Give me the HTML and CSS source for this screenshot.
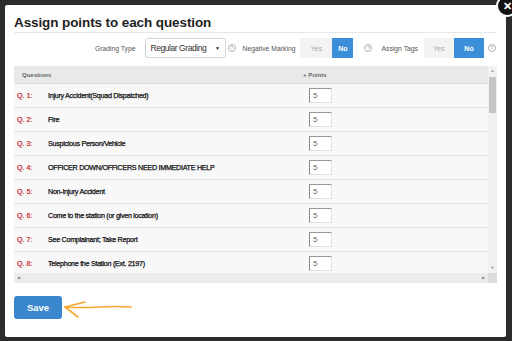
FILE: index.html
```html
<!DOCTYPE html>
<html>
<head>
<meta charset="utf-8">
<link rel="stylesheet" href="styles.css">
</head>
<body>
<div class="modal">
  <div class="close">&#x2715;</div>
  <h1 class="title">Assign points to each question</h1>
  <div class="toolbar">
    <span class="lbl l-grading">Grading Type</span>
    <div class="select"><span>Regular Grading</span><span class="caret">&#9660;</span></div>
    <span class="help h1">?</span>
    <span class="lbl l-neg">Negative Marking</span>
    <div class="toggle t1"><span class="yes">Yes</span><span class="no">No</span></div>
    <span class="help h2">?</span>
    <span class="lbl l-tags">Assign Tags</span>
    <div class="toggle t2"><span class="yes">Yes</span><span class="no">No</span></div>
    <span class="help h3">?</span>
  </div>
  <div class="tablewrap">
    <div class="viewport">
      <div class="thead">
        <div class="hq">Questions</div>
        <div class="hp">+ Points</div>
      </div>
      <div class="row"><div class="q"><span class="num">Q. 1:</span><span class="txt">Injury Accident(Squad Dispatched)</span></div><div class="p"><span class="inp">5</span></div></div>
      <div class="row"><div class="q"><span class="num">Q. 2:</span><span class="txt">Fire</span></div><div class="p"><span class="inp">5</span></div></div>
      <div class="row"><div class="q"><span class="num">Q. 3:</span><span class="txt">Suspicious Person/Vehicle</span></div><div class="p"><span class="inp">5</span></div></div>
      <div class="row"><div class="q"><span class="num">Q. 4:</span><span class="txt">OFFICER DOWN/OFFICERS NEED IMMEDIATE HELP</span></div><div class="p"><span class="inp">5</span></div></div>
      <div class="row"><div class="q"><span class="num">Q. 5:</span><span class="txt">Non-Injury Accident</span></div><div class="p"><span class="inp">5</span></div></div>
      <div class="row"><div class="q"><span class="num">Q. 6:</span><span class="txt">Come to the station (or given location)</span></div><div class="p"><span class="inp">5</span></div></div>
      <div class="row"><div class="q"><span class="num">Q. 7:</span><span class="txt">See Complainant; Take Report</span></div><div class="p"><span class="inp">5</span></div></div>
      <div class="row"><div class="q"><span class="num">Q. 8:</span><span class="txt">Telephone the Station (Ext. 2197)</span></div><div class="p"><span class="inp">5</span></div></div>
    </div>
    <div class="vbar">
      <span class="arr">&#9650;</span>
      <div class="vtrack"><div class="vthumb"></div></div>
      <span class="arr">&#9660;</span>
    </div>
    <div class="hbar"><span class="arr">&#9664;</span><span class="arr">&#9654;</span></div>
    <div class="corner"></div>
  </div>
  <div class="footer">
    <button class="save">Save</button>
    <svg class="pointer" width="72" height="22" viewBox="0 0 72 22">
      <path d="M2 10 Q20 11 36 10 T68 10" fill="none" stroke="#f5a630" stroke-width="1.6" stroke-linecap="round"/>
      <path d="M2 10 L22 5 M2 10 L15 20" fill="none" stroke="#f5a630" stroke-width="1.6" stroke-linecap="round"/>
    </svg>
  </div>
</div>
</body>
</html>
```

FILE: styles.css
```css
html, body {
  margin: 0;
  padding: 0;
}
body {
  width: 512px;
  height: 341px;
  background: #2c2c2c;
  font-family: "Liberation Sans", Arial, sans-serif;
  overflow: hidden;
}
.modal {
  position: relative;
  margin: 5px 6px 0 5px;
  height: 332px;
  background: #fff;
  border-radius: 2px;
  padding: 6px 10px 0 9px;
  box-sizing: border-box;
}
.close {
  position: absolute;
  left: 491px;
  top: -10px;
  width: 18px;
  height: 18px;
  border-radius: 50%;
  background: #111;
  border: 2px solid #fff;
  color: #fff;
  font-size: 11px;
  font-weight: bold;
  line-height: 18px;
  text-align: center;
}
.title {
  margin: 0;
  padding-top: 2px;
  font-size: 13.5px;
  line-height: 19px;
  letter-spacing: -0.1px;
  font-weight: bold;
  color: #1e1e1e;
  border-bottom: 1px solid #e6e6e6;
}
.toolbar {
  display: flex;
  align-items: center;
  justify-content: flex-end;
  height: 20px;
  margin-top: 5px;
  white-space: nowrap;
}
.lbl {
  font-size: 6.8px;
  color: #555;
  flex-shrink: 0;
}
.l-grading { margin-right: 9px; }
.l-neg { margin-left: 7px; margin-right: 5px; }
.l-tags { margin-left: 9px; margin-right: 6px; }
.select {
  flex-shrink: 0;
  width: 81px;
  height: 20px;
  box-sizing: border-box;
  border: 1px solid #d6d6d6;
  border-radius: 2px;
  font-size: 8.5px;
  letter-spacing: -0.45px;
  color: #333;
  line-height: 18px;
  padding: 0 5px 0 5px;
  display: flex;
  justify-content: space-between;
}
.caret {
  font-size: 5px;
  color: #222;
}
.help {
  flex-shrink: 0;
  width: 6px;
  height: 6px;
  border: 1px solid #b0b0b0;
  border-radius: 50%;
  font-size: 5px;
  line-height: 6px;
  text-align: center;
  color: #999;
}
.h1 { margin-left: 2px; }
.h2 { margin-left: 11px; }
.h3 { margin-left: 4px; }
.toggle {
  flex-shrink: 0;
  display: flex;
  height: 20px;
  font-size: 7px;
}
.toggle .yes {
  background: #f3f3f3;
  color: #aaa;
  display: flex;
  align-items: center;
  justify-content: center;
}
.toggle .no {
  background: #3a8fd8;
  color: #fff;
  font-weight: bold;
  display: flex;
  align-items: center;
  justify-content: center;
}
.t1 .yes { width: 32px; }
.t1 .no { width: 21px; }
.t2 .yes { width: 30px; }
.t2 .no { width: 30px; }
.tablewrap {
  margin-top: 8px;
  display: grid;
  grid-template-columns: 474px 9px;
  grid-template-rows: 207px 10px;
  width: 483px;
}
.viewport {
  overflow: hidden;
  background: #f8f8f8;
}
.thead {
  display: flex;
  height: 18px;
  align-items: center;
  background: #e9e9e9;
  border-bottom: 1px solid #dcdcdc;
  box-sizing: border-box;
  font-size: 6px;
  font-weight: bold;
  color: #666;
}
.hq {
  width: 289px;
  padding-left: 8px;
  box-sizing: border-box;
}
.row {
  display: flex;
  height: 24px;
  align-items: center;
  border-bottom: 1px solid #e3e3e3;
  box-sizing: border-box;
  font-size: 7.2px;
}
.q {
  width: 295px;
  display: flex;
  padding-left: 3px;
  box-sizing: border-box;
  white-space: nowrap;
}
.num {
  width: 31px;
  color: #c4212a;
  -webkit-text-stroke: 0.2px #c4212a;
}
.txt {
  color: #111;
  letter-spacing: -0.3px;
  -webkit-text-stroke: 0.25px #111;
}
.inp {
  display: block;
  width: 23px;
  height: 15px;
  box-sizing: border-box;
  background: #fff;
  border: 1px solid #e2e2e2;
  border-left-color: #888;
  border-top-color: #999;
  font-size: 8px;
  color: #666;
  line-height: 13px;
  padding-left: 3px;
}
.vbar {
  background: #f1f1f1;
  display: flex;
  flex-direction: column;
  align-items: center;
}
.arr {
  font-size: 4px;
  color: #888;
  line-height: 10px;
  height: 10px;
}
.vtrack {
  flex: 1;
  width: 100%;
}
.vthumb {
  margin: 1px 1px 0 1px;
  height: 36px;
  background: #c4c4c4;
}
.hbar {
  background: #ececec;
  display: flex;
  justify-content: space-between;
  padding: 0 3px;
}
.corner {
  background: #dcdcdc;
}
.footer {
  display: flex;
  align-items: center;
  margin-top: 13px;
}
.save {
  width: 48px;
  height: 23px;
  border: none;
  border-radius: 3px;
  background: #3b87cd;
  color: #fff;
  font-family: "Liberation Sans", Arial, sans-serif;
  font-size: 9.5px;
  font-weight: bold;
  padding: 0;
}
.pointer {
  display: block;
  margin-left: 1px;
}
```
